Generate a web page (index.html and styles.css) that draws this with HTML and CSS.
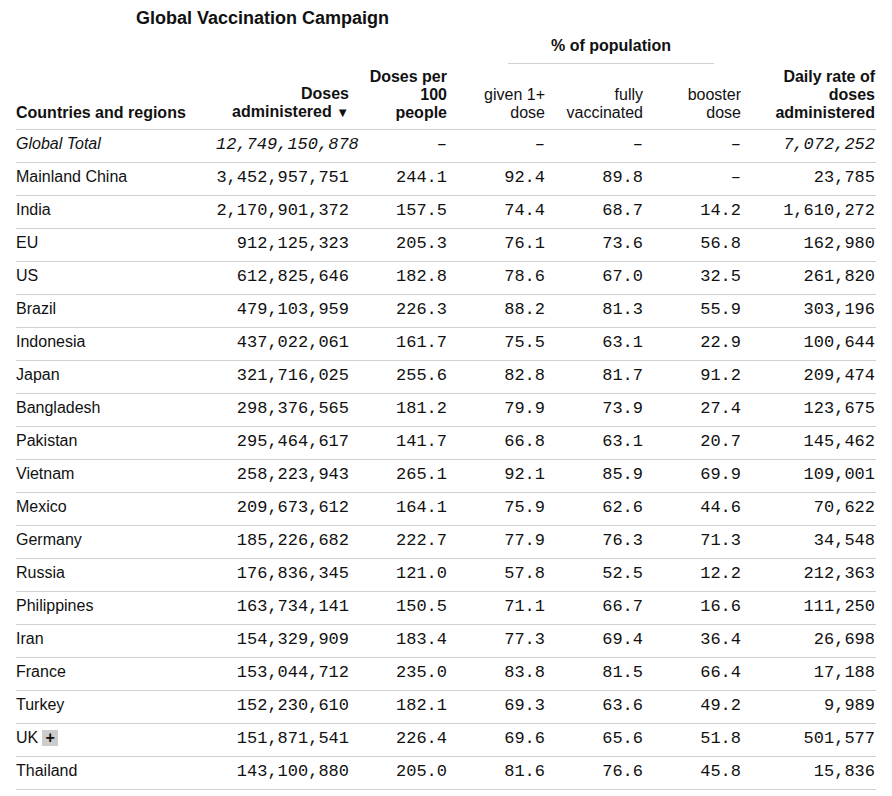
FILE: index.html
```html
<!DOCTYPE html>
<html>
<head>
<meta charset="utf-8">
<link rel="stylesheet" href="styles.css">
</head>
<body>
<div class="page">
  <h1 class="title">Global Vaccination Campaign</h1>
  <table class="vax">
    <colgroup>
      <col class="c-country"><col class="c-doses"><col class="c-mid"><col class="c-mid"><col class="c-mid"><col class="c-mid"><col class="c-daily">
    </colgroup>
    <thead>
      <tr class="group-row">
        <th colspan="3"></th>
        <th colspan="3" class="group"><div class="group-label">% of population</div></th>
        <th></th>
      </tr>
      <tr class="head-row">
        <th class="left strong">Countries and regions</th>
        <th class="strong">Doses<br>administered <span class="sort">▼</span></th>
        <th class="strong">Doses per<br>100<br>people</th>
        <th>given 1+<br>dose</th>
        <th>fully<br>vaccinated</th>
        <th>booster<br>dose</th>
        <th class="strong">Daily rate of<br>doses<br>administered</th>
      </tr>
    </thead>
    <tbody>
      <tr class="total"><td class="name">Global Total</td><td class="num">12,749,150,878</td><td class="num">–</td><td class="num">–</td><td class="num">–</td><td class="num">–</td><td class="num">7,072,252</td></tr>
      <tr><td class="name">Mainland China</td><td class="num">3,452,957,751</td><td class="num">244.1</td><td class="num">92.4</td><td class="num">89.8</td><td class="num">–</td><td class="num">23,785</td></tr>
      <tr><td class="name">India</td><td class="num">2,170,901,372</td><td class="num">157.5</td><td class="num">74.4</td><td class="num">68.7</td><td class="num">14.2</td><td class="num">1,610,272</td></tr>
      <tr><td class="name">EU</td><td class="num">912,125,323</td><td class="num">205.3</td><td class="num">76.1</td><td class="num">73.6</td><td class="num">56.8</td><td class="num">162,980</td></tr>
      <tr><td class="name">US</td><td class="num">612,825,646</td><td class="num">182.8</td><td class="num">78.6</td><td class="num">67.0</td><td class="num">32.5</td><td class="num">261,820</td></tr>
      <tr><td class="name">Brazil</td><td class="num">479,103,959</td><td class="num">226.3</td><td class="num">88.2</td><td class="num">81.3</td><td class="num">55.9</td><td class="num">303,196</td></tr>
      <tr><td class="name">Indonesia</td><td class="num">437,022,061</td><td class="num">161.7</td><td class="num">75.5</td><td class="num">63.1</td><td class="num">22.9</td><td class="num">100,644</td></tr>
      <tr><td class="name">Japan</td><td class="num">321,716,025</td><td class="num">255.6</td><td class="num">82.8</td><td class="num">81.7</td><td class="num">91.2</td><td class="num">209,474</td></tr>
      <tr><td class="name">Bangladesh</td><td class="num">298,376,565</td><td class="num">181.2</td><td class="num">79.9</td><td class="num">73.9</td><td class="num">27.4</td><td class="num">123,675</td></tr>
      <tr><td class="name">Pakistan</td><td class="num">295,464,617</td><td class="num">141.7</td><td class="num">66.8</td><td class="num">63.1</td><td class="num">20.7</td><td class="num">145,462</td></tr>
      <tr><td class="name">Vietnam</td><td class="num">258,223,943</td><td class="num">265.1</td><td class="num">92.1</td><td class="num">85.9</td><td class="num">69.9</td><td class="num">109,001</td></tr>
      <tr><td class="name">Mexico</td><td class="num">209,673,612</td><td class="num">164.1</td><td class="num">75.9</td><td class="num">62.6</td><td class="num">44.6</td><td class="num">70,622</td></tr>
      <tr><td class="name">Germany</td><td class="num">185,226,682</td><td class="num">222.7</td><td class="num">77.9</td><td class="num">76.3</td><td class="num">71.3</td><td class="num">34,548</td></tr>
      <tr><td class="name">Russia</td><td class="num">176,836,345</td><td class="num">121.0</td><td class="num">57.8</td><td class="num">52.5</td><td class="num">12.2</td><td class="num">212,363</td></tr>
      <tr><td class="name">Philippines</td><td class="num">163,734,141</td><td class="num">150.5</td><td class="num">71.1</td><td class="num">66.7</td><td class="num">16.6</td><td class="num">111,250</td></tr>
      <tr><td class="name">Iran</td><td class="num">154,329,909</td><td class="num">183.4</td><td class="num">77.3</td><td class="num">69.4</td><td class="num">36.4</td><td class="num">26,698</td></tr>
      <tr><td class="name">France</td><td class="num">153,044,712</td><td class="num">235.0</td><td class="num">83.8</td><td class="num">81.5</td><td class="num">66.4</td><td class="num">17,188</td></tr>
      <tr><td class="name">Turkey</td><td class="num">152,230,610</td><td class="num">182.1</td><td class="num">69.3</td><td class="num">63.6</td><td class="num">49.2</td><td class="num">9,989</td></tr>
      <tr><td class="name">UK<span class="expand">+</span></td><td class="num">151,871,541</td><td class="num">226.4</td><td class="num">69.6</td><td class="num">65.6</td><td class="num">51.8</td><td class="num">501,577</td></tr>
      <tr><td class="name">Thailand</td><td class="num">143,100,880</td><td class="num">205.0</td><td class="num">81.6</td><td class="num">76.6</td><td class="num">45.8</td><td class="num">15,836</td></tr>
    </tbody>
  </table>
</div>
</body>
</html>
```

FILE: styles.css
```css
html, body {
  margin: 0;
  padding: 0;
  background: #fff;
}

.page {
  padding: 0 16px;
  font-family: "Liberation Sans", Arial, sans-serif;
  color: #111;
}

.title {
  margin: 0 0 0 120px;
  padding-top: 8px;
  font-size: 18px;
  line-height: 21px;
  font-weight: bold;
}

.vax {
  width: 860px;
  border-collapse: collapse;
  table-layout: fixed;
  font-size: 16px;
  line-height: 18px;
}

.c-country { width: 200px; }
.c-doses { width: 134px; }
.c-mid { width: 98px; }
.c-daily { width: 134px; }

.vax th {
  padding: 0 1px 0 0;
  font-weight: normal;
  text-align: right;
  vertical-align: bottom;
}

.group-row th {
  padding: 8px 0 0 0;
}

.group-label {
  margin: 0 28px 0 60px;
  padding-bottom: 8px;
  border-bottom: 1px solid #d0d0d0;
  text-align: center;
  font-weight: bold;
}

.head-row th {
  height: 58px;
  padding: 0 1px 7px 0;
  border-bottom: 1px solid #d0d0d0;
}

.vax th.left {
  text-align: left;
}

.vax th.strong {
  font-weight: bold;
}

.sort {
  font-size: 13px;
}

.vax td {
  height: 18px;
  padding: 5px 1px 8px 0;
  border-bottom: 1px solid #d0d0d0;
  vertical-align: baseline;
  white-space: nowrap;
}

.vax td.name {
  text-align: left;
}

.vax td.num {
  text-align: right;
  font-family: "Liberation Mono", "Courier New", monospace;
  font-size: 17px;
}

.total td {
  font-style: italic;
}

.expand {
  display: inline-block;
  width: 16px;
  height: 16px;
  margin-left: 4px;
  background: #cccccc;
  text-align: center;
  font-weight: bold;
  font-size: 16px;
  line-height: 16px;
}
```
